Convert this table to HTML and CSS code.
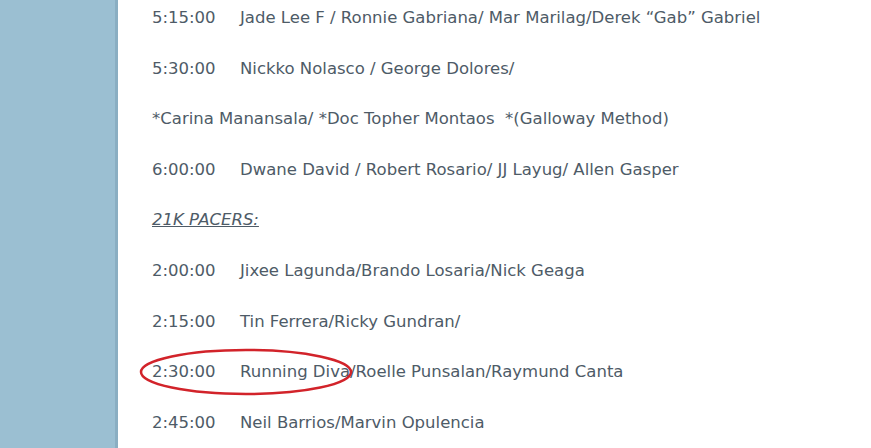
FILE: index.html
```html
<!DOCTYPE html>
<html>
<head>
<meta charset="utf-8">
<link rel="stylesheet" href="styles.css">
</head>
<body>
<div class="page">
  <div class="side"></div>
  <div class="content">
    <p><span class="t">5:15:00</span>Jade Lee F / Ronnie Gabriana/ Mar Marilag/Derek “Gab” Gabriel</p>
    <p><span class="t">5:30:00</span>Nickko Nolasco / George Dolores/</p>
    <p>*Carina Manansala/ *Doc Topher Montaos&nbsp; *(Galloway Method)</p>
    <p><span class="t">6:00:00</span>Dwane David / Robert Rosario/ JJ Layug/ Allen Gasper</p>
    <p><em class="head">21K PACERS:</em></p>
    <p><span class="t">2:00:00</span>Jixee Lagunda/Brando Losaria/Nick Geaga</p>
    <p><span class="t">2:15:00</span>Tin Ferrera/Ricky Gundran/</p>
    <p class="marked"><span class="t">2:30:00</span>Running Diva/Roelle Punsalan/Raymund Canta
      <svg class="circle" width="220" height="52" viewBox="0 0 220 52"><ellipse cx="108" cy="26" rx="105" ry="22" fill="none" stroke="#d2232a" stroke-width="2.5"/></svg>
    </p>
    <p><span class="t">2:45:00</span>Neil Barrios/Marvin Opulencia</p>
  </div>
</div>
</body>
</html>
```
FILE: styles.css
```css
html, body { margin: 0; padding: 0; }
body { background: #9bbfd2; overflow: hidden; }
.page { display: flex; height: 448px; }
.side { width: 115px; flex: none; background: #9bbfd2; border-right: 3px solid #8aaec2; }
.content {
  flex: 1;
  background: #fff;
  padding: 6px 0 0 34px;
  font-family: "DejaVu Sans", Verdana, sans-serif;
  font-size: 16.5px;
  color: #4e5b67;
}
.content p { margin: 0 0 26.6px 0; line-height: 24px; white-space: nowrap; }
.t { display: inline-block; width: 88px; }
.head { text-decoration: underline; }
.marked { position: relative; }
.circle { position: absolute; left: -14px; top: -14px; }
```
